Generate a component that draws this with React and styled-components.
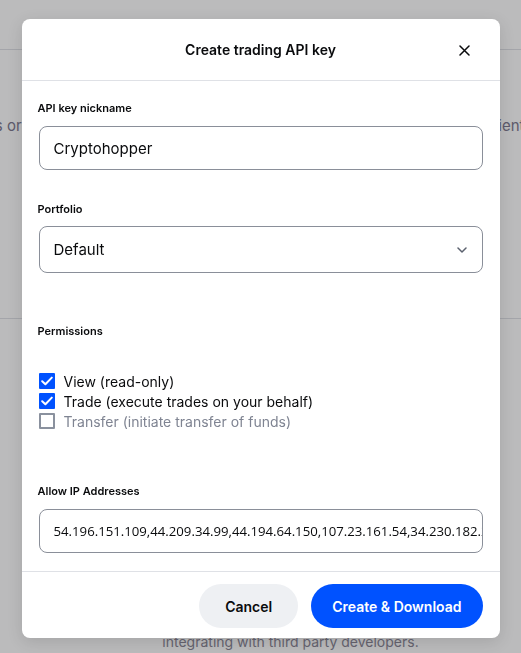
import React from "react";
import styled, { createGlobalStyle } from "styled-components";

const GlobalStyle = createGlobalStyle`
  html, body {
    margin: 0;
    padding: 0;
    height: 100%;
    overflow: hidden;
    background: #ffffff;
    font-family: Inter, "Noto Sans", "Liberation Sans", sans-serif;
  }
`;

const Page = styled.div`
  height: 653px;
  background: #ffffff;
  display: flex;
  flex-direction: column;
  overflow: hidden;
`;

const TopBar = styled.div`
  height: 49px;
  border-bottom: 1px solid #dfe1e6;
`;

const Intro = styled.div`
  margin-top: 66px;
  display: flex;
  justify-content: center;
  overflow: hidden;
  font-size: 15px;
  color: #7e7a90;
  white-space: nowrap;
`;

const Divider = styled.div`
  margin-top: 183px;
  border-top: 1px solid #dfe1e6;
`;

const Footnote = styled.p`
  margin: auto 0 3px;
  text-align: center;
  padding-left: 60px;
  font-size: 14px;
  color: #8a8796;
  white-space: nowrap;
`;

const Overlay = styled.div`
  position: fixed;
  inset: 0;
  background: rgba(10, 11, 13, 0.28);
  display: flex;
  justify-content: center;
  align-items: flex-start;
  padding-top: 19px;
`;

const Modal = styled.div`
  width: 478px;
  background: #ffffff;
  border-radius: 8px;
  box-shadow: 0 4px 16px rgba(0, 0, 0, 0.12);
  display: flex;
  flex-direction: column;
  overflow: hidden;
`;

const Header = styled.div`
  height: 61px;
  display: flex;
  align-items: center;
  justify-content: center;
  position: relative;
  border-bottom: 1px solid #dfe1e6;
`;

const Title = styled.h2`
  margin: 0;
  font-size: 14px;
  font-weight: 600;
  color: #0a0b0d;
`;

const CloseButton = styled.button`
  position: absolute;
  right: 28px;
  top: 24px;
  width: 14px;
  height: 14px;
  padding: 0;
  border: none;
  background: none;
  display: flex;
  align-items: center;
  justify-content: center;
  cursor: pointer;
`;

const Body = styled.div`
  padding: 19px 17px 18px 16px;
  display: flex;
  flex-direction: column;
`;

const Label = styled.div`
  margin-top: ${(p) => p.$top ?? 0}px;
  margin-bottom: ${(p) => p.$bottom ?? 10}px;
  font-size: 11px;
  line-height: 16px;
  font-weight: 600;
  color: #0a0b0d;
`;

const Field = styled.div`
  height: ${(p) => p.$height ?? 44}px;
  border: 1px solid #8a8f99;
  border-radius: 8px;
  display: flex;
  align-items: center;
  padding: 0 ${(p) => p.$padRight ?? 14}px 0 14px;
  box-sizing: border-box;
  overflow: hidden;
  margin-left: 1px;
`;

const FieldText = styled.span`
  font-family: ${(p) => (p.$alt ? '"Open Sans", "Liberation Sans", sans-serif' : "inherit")};
  font-size: ${(p) => (p.$alt ? 13.2 : 15)}px;
  color: #0a0b0d;
  white-space: nowrap;
  flex: 1;
  overflow: hidden;
`;

const Options = styled.div`
  margin-top: 32px;
  display: flex;
  flex-direction: column;
  padding-left: 1px;
`;

const Option = styled.label`
  display: flex;
  align-items: center;
  gap: 9px;
  height: 20px;
  font-size: 14px;
  color: ${(p) => (p.$muted ? "#7f8492" : "#0a0b0d")};
`;

const Box = styled.span`
  width: 16px;
  height: 16px;
  box-sizing: border-box;
  border-radius: 1px;
  background: ${(p) => (p.$checked ? "#0052ff" : "#ffffff")};
  border: ${(p) => (p.$checked ? "none" : "2px solid #8a919e")};
  display: flex;
  align-items: center;
  justify-content: center;
`;

const Footer = styled.div`
  border-top: 1px solid #dfe1e6;
  padding: 12px 17px 10px;
  display: flex;
  justify-content: flex-end;
  gap: 13px;
`;

const Button = styled.button`
  height: 44px;
  padding: 0 ${(p) => (p.$primary ? 21 : 26)}px;
  border: none;
  border-radius: 22px;
  font-family: inherit;
  font-size: 14px;
  font-weight: 600;
  background: ${(p) => (p.$primary ? "#0052ff" : "#eef0f3")};
  color: ${(p) => (p.$primary ? "#ffffff" : "#0a0b0d")};
  cursor: pointer;
`;

const Check = () => (
  <svg width="12" height="10" viewBox="0 0 12 10" fill="none">
    <path d="M1.2 5.2L4.4 8.2L10.8 1.6" stroke="#fff" strokeWidth="2" strokeLinecap="round" strokeLinejoin="round" />
  </svg>
);

const permissions = [
  { label: "View (read-only)", checked: true },
  { label: "Trade (execute trades on your behalf)", checked: true },
  { label: "Transfer (initiate transfer of funds)", checked: false },
];

export default function App() {
  return (
    <>
      <GlobalStyle />
      <Page>
        <TopBar />
        <Intro>
          <span>
            Link bots or other apps to view all of your balances and place trades for your clients safely.
          </span>
        </Intro>
        <Divider />
        <Footnote>integrating with third party developers.</Footnote>
      </Page>
      <Overlay>
        <Modal>
          <Header>
            <Title>Create trading API key</Title>
            <CloseButton aria-label="Close">
              <svg width="11" height="11" viewBox="0 0 11 11">
                <path d="M1 1L10 10M10 1L1 10" stroke="#0a0b0d" strokeWidth="1.5" strokeLinecap="round" />
              </svg>
            </CloseButton>
          </Header>
          <Body>
            <Label>API key nickname</Label>
            <Field>
              <FieldText>Cryptohopper</FieldText>
            </Field>

            <Label $top={31} $bottom={9}>Portfolio</Label>
            <Field $height={47} $padRight={15}>
              <FieldText>Default</FieldText>
              <svg width="10" height="6" viewBox="0 0 10 6">
                <path d="M1 1L5 5L9 1" stroke="#5b616e" strokeWidth="1.5" fill="none" strokeLinecap="round" strokeLinejoin="round" />
              </svg>
            </Field>

            <Label $top={50} $bottom={0}>Permissions</Label>
            <Options>
              {permissions.map((p) => (
                <Option key={p.label} $muted={!p.checked}>
                  <Box $checked={p.checked}>{p.checked && <Check />}</Box>
                  {p.label}
                </Option>
              ))}
            </Options>

            <Label $top={52}>Allow IP Addresses</Label>
            <Field $padRight={0}>
              <FieldText $alt>54.196.151.109,44.209.34.99,44.194.64.150,107.23.161.54,34.230.182.200</FieldText>
            </Field>
          </Body>
          <Footer>
            <Button>Cancel</Button>
            <Button $primary>Create &amp; Download</Button>
          </Footer>
        </Modal>
      </Overlay>
    </>
  );
}
